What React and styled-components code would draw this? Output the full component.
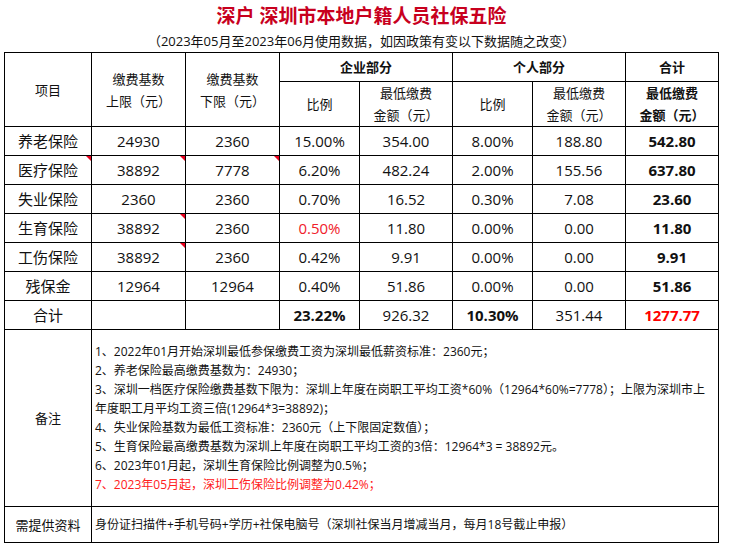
import styled, { createGlobalStyle } from "styled-components";

const GlobalStyle = createGlobalStyle`
  body {
    margin: 0;
    background: #fff;
    font-family: "Open Sans", "Noto Sans CJK SC", sans-serif;
    color: #000;
  }
`;

const columns = [87, 94, 94, 80, 93, 80, 93, 93];

const rows = [
  { name: "养老保险", upper: "24930", lower: "2360", coRate: "15.00%", coAmt: "354.00", pRate: "8.00%", pAmt: "188.80", total: "542.80" },
  { name: "医疗保险", upper: "38892", lower: "7778", coRate: "6.20%", coAmt: "482.24", pRate: "2.00%", pAmt: "155.56", total: "637.80", marks: ["name", "upper", "lower"] },
  { name: "失业保险", upper: "2360", lower: "2360", coRate: "0.70%", coAmt: "16.52", pRate: "0.30%", pAmt: "7.08", total: "23.60" },
  { name: "生育保险", upper: "38892", lower: "2360", coRate: "0.50%", coAmt: "11.80", pRate: "0.00%", pAmt: "0.00", total: "11.80", marks: ["upper"], redRate: true },
  { name: "工伤保险", upper: "38892", lower: "2360", coRate: "0.42%", coAmt: "9.91", pRate: "0.00%", pAmt: "0.00", total: "9.91", marks: ["upper"] },
  { name: "残保金", upper: "12964", lower: "12964", coRate: "0.40%", coAmt: "51.86", pRate: "0.00%", pAmt: "0.00", total: "51.86" },
];

const notes = [
  ["1、2022年01月开始深圳最低参保缴费工资为深圳最低薪资标准：2360元；"],
  ["2、养老保险最高缴费基数为：24930；"],
  ["3、深圳一档医疗保险缴费基数下限为：深圳上年度在岗职工平均工资*60%（12964*60%=7778）；上限为深圳市上"],
  ["年度职工月平均工资三倍(12964*3=38892)；"],
  ["4、失业保险基数为最低工资标准：2360元（上下限固定数值）；"],
  ["5、生育保险最高缴费基数为深圳上年度在岗职工平均工资的3倍：12964*3 = 38892元。"],
  ["6、2023年01月起，深圳生育保险比例调整为0.5%；"],
  ["7、2023年05月起，深圳工伤保险比例调整为0.42%；", true],
];

const App = () => {
  const marked = (row, key) => row.marks && row.marks.includes(key);

  return (
    <Page>
      <GlobalStyle />
      <Title>深户 深圳市本地户籍人员社保五险</Title>
      <Subtitle>（2023年05月至2023年06月使用数据，如因政策有变以下数据随之改变）</Subtitle>
      <Table>
        <colgroup>
          {columns.map((w, i) => (
            <col key={i} style={{ width: w }} />
          ))}
        </colgroup>
        <thead>
          <tr>
            <HeadCell rowSpan={2}>项目</HeadCell>
            <HeadCell rowSpan={2}>
              缴费基数
              <br />
              上限（元）
            </HeadCell>
            <HeadCell rowSpan={2}>
              缴费基数
              <br />
              下限（元）
            </HeadCell>
            <HeadCell colSpan={2} $bold $top>
              企业部分
            </HeadCell>
            <HeadCell colSpan={2} $bold $top>
              个人部分
            </HeadCell>
            <HeadCell $bold $top>
              合计
            </HeadCell>
          </tr>
          <tr>
            <HeadCell $sub>比例</HeadCell>
            <HeadCell $sub>
              最低缴费
              <br />
              金额（元）
            </HeadCell>
            <HeadCell $sub>比例</HeadCell>
            <HeadCell $sub>
              最低缴费
              <br />
              金额（元）
            </HeadCell>
            <HeadCell $sub $bold>
              最低缴费
              <br />
              金额（元）
            </HeadCell>
          </tr>
        </thead>
        <tbody>
          {rows.map((row) => (
            <tr key={row.name}>
              <Cell>
                {row.name}
                {marked(row, "name") && <Corner />}
              </Cell>
              <Cell>
                {row.upper}
                {marked(row, "upper") && <Corner />}
              </Cell>
              <Cell>
                {row.lower}
                {marked(row, "lower") && <Corner />}
              </Cell>
              <Cell $red={row.redRate}>{row.coRate}</Cell>
              <Cell>{row.coAmt}</Cell>
              <Cell>{row.pRate}</Cell>
              <Cell>{row.pAmt}</Cell>
              <Cell $bold>{row.total}</Cell>
            </tr>
          ))}
          <tr>
            <Cell>合计</Cell>
            <Cell />
            <Cell />
            <Cell $bold>23.22%</Cell>
            <Cell>926.32</Cell>
            <Cell $bold>10.30%</Cell>
            <Cell>351.44</Cell>
            <Cell $bold $bright>
              1277.77
            </Cell>
          </tr>
          <tr>
            <LabelCell $height={177}>备注</LabelCell>
            <NoteCell colSpan={7}>
              {notes.map(([text, red], i) => (
                <NoteLine key={i} $red={red}>
                  {text}
                </NoteLine>
              ))}
            </NoteCell>
          </tr>
          <tr>
            <LabelCell $height={36}>需提供资料</LabelCell>
            <NoteCell colSpan={7}>
              <NoteLine>
                身份证扫描件+手机号码+学历+社保电脑号（深圳社保当月增减当月，每月18号截止申报）
              </NoteLine>
            </NoteCell>
          </tr>
        </tbody>
      </Table>
    </Page>
  );
};

const Page = styled.div`
  width: 729px;
  height: 548px;
  padding: 4px 0 0 4px;
  box-sizing: border-box;
  overflow: hidden;
`;

const Title = styled.h1`
  margin: 0;
  width: 715px;
  height: 24px;
  line-height: 24px;
  text-align: center;
  font-size: 19px;
  font-weight: bold;
  color: #c8001e;
`;

const Subtitle = styled.div`
  width: 715px;
  margin: 4px 0 2px;
  line-height: 18px;
  text-align: center;
  font-size: 13px;
  color: #111;
`;

const Table = styled.table`
  border-collapse: collapse;
  table-layout: fixed;
  width: 715px;
  border: 1px solid #000;
`;

const HeadCell = styled.td`
  border: 1px solid #000;
  padding: 0;
  height: ${(p) => (p.$top ? "28px" : "43px")};
  text-align: center;
  vertical-align: middle;
  font-size: 13px;
  line-height: 22px;
  font-weight: ${(p) => (p.$bold ? "bold" : "normal")};
  color: #111;
`;

const Cell = styled.td`
  position: relative;
  border: 1px solid #000;
  padding: 0;
  height: 28px;
  text-align: center;
  vertical-align: middle;
  font-size: 15px;
  line-height: 20px;
  font-weight: ${(p) => (p.$bold ? "bold" : "normal")};
  color: ${(p) => (p.$bright ? "#ff0000" : p.$red ? "#f0202a" : "#111")};
`;

const Corner = styled.span`
  position: absolute;
  top: 0;
  right: 0;
  width: 0;
  height: 0;
  border-top: 5px solid #e8001c;
  border-left: 5px solid transparent;
`;

const LabelCell = styled.td`
  border: 1px solid #000;
  padding: 0;
  height: ${(p) => p.$height - 1}px;
  text-align: center;
  vertical-align: middle;
  font-size: 13px;
  line-height: 20px;
  color: #111;
`;

const NoteCell = styled.td`
  border: 1px solid #000;
  padding: 0 0 0 3px;
  vertical-align: middle;
  text-align: left;
`;

const NoteLine = styled.div`
  font-size: 12px;
  line-height: 19px;
  white-space: nowrap;
  color: ${(p) => (p.$red ? "#ff2020" : "#111")};
`;

export default App;
